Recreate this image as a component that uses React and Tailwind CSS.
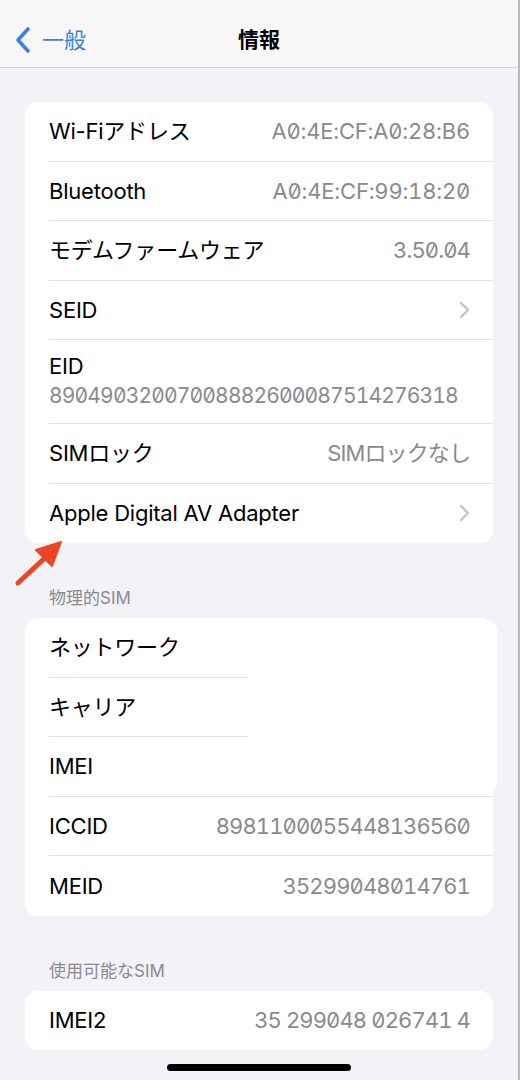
const LABEL = 'text-[22px] leading-[28px] tracking-[-0.01em] text-black';
const VALUE = 'text-[22px] leading-[28px] text-[#8a8a8e] tabular-nums slashed-zero';

function ChevronRight() {
  return (
    <svg width="11" height="18" viewBox="0 0 11 18" fill="none" className="shrink-0">
      <path d="M2 2l7 7-7 7" stroke="#c4c4c7" strokeWidth="2.4" strokeLinecap="round" strokeLinejoin="round" />
    </svg>
  );
}

function Row({ label, value, chevron, last, wide }) {
  return (
    <div className="pl-[24px]">
      <div
        className={`flex h-[59.5px] items-center justify-between pr-[23px] ${last ? '' : 'border-b border-[#e2e2e6]'}`}
      >
        <span className={LABEL}>{label}</span>
        {value && (
          <span className={`${VALUE} ${wide ? 'tracking-[-0.01em]' : 'tracking-[-0.04em]'}`}>{value}</span>
        )}
        {chevron && <ChevronRight />}
      </div>
    </div>
  );
}

function Card({ children }) {
  return <div className="relative mx-[25px] rounded-[13px] bg-white">{children}</div>;
}

function SectionHeader({ children }) {
  return (
    <div className="mx-[49px] mb-[10px] mt-[45px] h-[20px] text-[17px] leading-[20px] text-[#8a8a8e]">{children}</div>
  );
}

export default function App() {
  return (
    <div className="relative min-h-[1080px] w-[520px] overflow-hidden border-r-2 border-[#b9b9bd] bg-[#f2f2f7] font-['Inter','Noto_Sans_CJK_JP',sans-serif]">
      {/* nav bar */}
      <div className="relative flex h-[68px] items-center justify-center border-b border-[#d6d6da] bg-[#f7f7f8] pt-[12px]">
        <div className="absolute left-[14px] top-[26px] flex items-center gap-[10px]">
          <svg width="18" height="28" viewBox="0 0 18 28" fill="none">
            <path d="M14 3L4 14l10 11" stroke="#3a82e0" strokeWidth="3.6" strokeLinecap="round" strokeLinejoin="round" />
          </svg>
          <span className="text-[22px] leading-[28px] text-[#3a82e0]">一般</span>
        </div>
        <span className="text-[21px] font-bold leading-[28px] text-black">情報</span>
      </div>

      <div className="pt-[34px]">
        <Card>
          <Row label="Wi-Fiアドレス" value="A0:4E:CF:A0:28:B6" wide />
          <Row label="Bluetooth" value="A0:4E:CF:99:18:20" wide />
          <Row label="モデムファームウェア" value="3.50.04" />
          <Row label="SEID" chevron />
          <div className="pl-[24px]">
            <div className="flex h-[84px] flex-col justify-center border-b border-[#e2e2e6] pb-[2px]">
              <span className={LABEL}>EID</span>
              <span className="mt-[2px] text-[21px] leading-[28px] tracking-[-0.04em] text-[#8a8a8e] tabular-nums slashed-zero">
                89049032007008882600087514276318
              </span>
            </div>
          </div>
          <Row label="SIMロック" value="SIMロックなし" />
          <Row label="Apple Digital AV Adapter" chevron last />
        </Card>

        <SectionHeader>物理的SIM</SectionHeader>
        <Card>
          <Row label="ネットワーク" />
          <Row label="キャリア" />
          <Row label="IMEI" />
          <Row label="ICCID" value="8981100055448136560" />
          <Row label="MEID" value="35299048014761" last />
          {/* redacted area */}
          <div className="absolute left-[223px] top-[2px] h-[174px] w-[249px] rounded-[10px] bg-white" />
        </Card>

        <SectionHeader>使用可能なSIM</SectionHeader>
        <Card>
          <Row label="IMEI2" value="35 299048 026741 4" last />
        </Card>

        <div className="mt-[14px] flex justify-center">
          <div className="h-[7px] w-[184px] rounded-full bg-black" />
        </div>
      </div>

      {/* annotation arrow */}
      <svg className="absolute left-[10px] top-[536px]" width="60" height="56" viewBox="0 0 60 56" fill="none">
        <path d="M8 47L38 19" stroke="#ef4424" strokeWidth="5" strokeLinecap="round" />
        <path d="M51 6L26 14L42 30Z" fill="#ef4424" stroke="#ef4424" strokeWidth="2" strokeLinejoin="round" />
      </svg>
    </div>
  );
}
